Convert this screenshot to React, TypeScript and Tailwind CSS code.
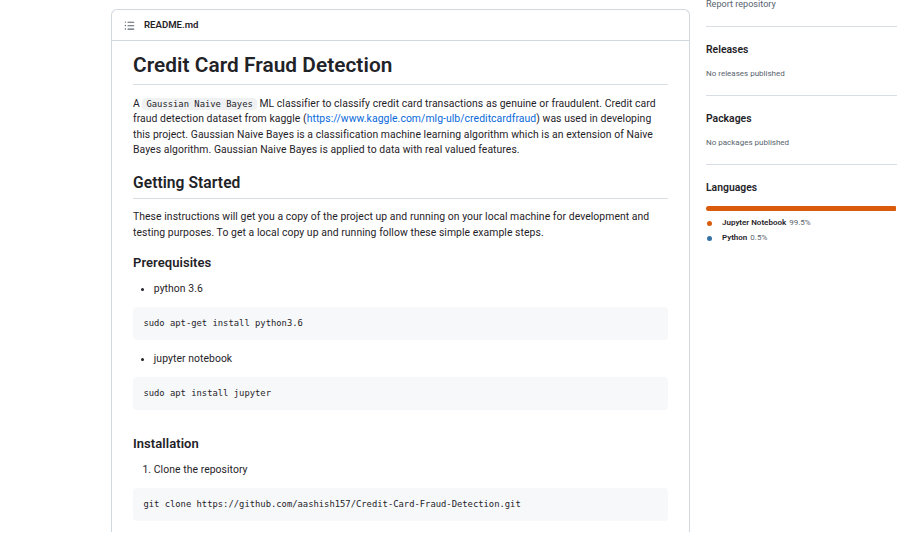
import React from 'react';

const sans = 'font-["Roboto","Noto_Sans",sans-serif]';

const ListIcon = () => (
  <svg viewBox="0 0 16 16" width="11" height="11" fill="#59636e">
    <path d="M5.75 2.5h8.5a.75.75 0 0 1 0 1.5h-8.5a.75.75 0 0 1 0-1.5Zm0 5h8.5a.75.75 0 0 1 0 1.5h-8.5a.75.75 0 0 1 0-1.5Zm0 5h8.5a.75.75 0 0 1 0 1.5h-8.5a.75.75 0 0 1 0-1.5ZM2 14a1 1 0 1 1 0-2 1 1 0 0 1 0 2Zm1-6a1 1 0 1 1-2 0 1 1 0 0 1 2 0ZM2 4a1 1 0 1 1 0-2 1 1 0 0 1 0 2Z" />
  </svg>
);

const Code = ({ children }: { children: React.ReactNode }) => (
  <pre className='mb-[10.4px] rounded-[4px] bg-[#f6f8fa] px-[10.4px] py-[10.4px] font-["DejaVu_Sans_Mono",monospace] text-[8.84px] leading-[12.8px] tracking-normal text-[#1f2328]'>
    {children}
  </pre>
);

const SideSection = ({ title, children }: { title: string; children: React.ReactNode }) => (
  <div className="border-t border-[#d8dee4] pt-[16px]">
    <h2 className="text-[10.4px] font-semibold leading-[14px] text-[#1f2328]">{title}</h2>
    {children}
  </div>
);

export default function App() {
  return (
    <div className={`h-[536px] w-[911px] overflow-hidden bg-white ${sans} text-[#1f2328]`}>
      <div className="ml-[111px] flex gap-[16px]">
        {/* README card */}
        <div className="mt-[9px] w-[579px] shrink-0 rounded-t-[6px] border border-b-0 border-[#d1d9e0]">
          <div className="flex h-[31px] items-center gap-[9px] border-b border-[#d1d9e0] pl-[12px]">
            <ListIcon />
            <span className="text-[9.6px] font-semibold">README.md</span>
          </div>
          <article className="px-[21px] pt-[11px] text-[10.4px] leading-[15.6px] tracking-[0.06px]">
            <h1 className="mb-[10.4px] border-b border-[#d8dee4] pb-[6.24px] text-[20.8px] font-semibold leading-[26px]">
              Credit Card Fraud Detection
            </h1>
            <p className="mb-[10.4px]">
              A{' '}
              <code className='rounded-[4px] bg-[#eff1f3] px-[4px] py-[1px] font-["DejaVu_Sans_Mono",monospace] text-[8.84px] leading-none tracking-normal'>
                Gaussian Naive Bayes
              </code>{' '}
              ML classifier to classify credit card transactions as genuine or fraudulent. Credit card fraud detection
              dataset from kaggle (
              <a className="text-[#0969da]">https://www.kaggle.com/mlg-ulb/creditcardfraud</a>) was used in developing
              this project. Gaussian Naive Bayes is a classification machine learning algorithm which is an extension of
              Naive Bayes algorithm. Gaussian Naive Bayes is applied to data with real valued features.
            </p>
            <h2 className="mb-[10.4px] mt-[15.6px] border-b border-[#d8dee4] pb-[4.68px] text-[15.6px] font-semibold leading-[19.5px]">
              Getting Started
            </h2>
            <p className="mb-[10.4px]">
              These instructions will get you a copy of the project up and running on your local machine for
              development and testing purposes. To get a local copy up and running follow these simple example steps.
            </p>
            <h3 className="mb-[9.4px] mt-[14.6px] text-[13px] font-semibold leading-[16.25px]">Prerequisites</h3>
            <ul className="mb-[10.4px] list-disc pl-[20.8px]">
              <li>python 3.6</li>
            </ul>
            <Code>sudo apt-get install python3.6</Code>
            <ul className="mb-[10.4px] list-disc pl-[20.8px]">
              <li>jupyter notebook</li>
            </ul>
            <Code>sudo apt install jupyter</Code>
            <h3 className="mb-[9.4px] mt-[26px] text-[13px] font-semibold leading-[16.25px]">Installation</h3>
            <ol className="mb-[10.4px] list-decimal pl-[20.8px]">
              <li>Clone the repository</li>
            </ol>
            <Code>git clone https://github.com/aashish157/Credit-Card-Fraud-Detection.git</Code>
          </article>
        </div>

        {/* Sidebar */}
        <aside className="mt-[-2px] w-[191px] shrink-0">
          <div className="pb-[16px] text-[9.1px] leading-[12px] text-[#59636e]">Report repository</div>
          <SideSection title="Releases">
            <p className="mb-[16px] mt-[12px] text-[8px] leading-[10px] text-[#59636e]">No releases published</p>
          </SideSection>
          <SideSection title="Packages">
            <p className="mb-[16px] mt-[12px] text-[8px] leading-[10px] text-[#59636e]">No packages published</p>
          </SideSection>
          <SideSection title="Languages">
            <div className="mt-[11px] flex h-[5px] gap-[1px] overflow-hidden rounded-[3px]">
              <div className="h-full bg-[#da5b0b]" style={{ width: '99.5%' }} />
              <div className="h-full flex-1 bg-[#3572a5]" />
            </div>
            <ul className="mt-[7px] flex flex-col gap-[5px] text-[8px] leading-[10px]">
              <li className="flex items-center">
                <span className="ml-[1px] mr-[10px] h-[5px] w-[5px] rounded-full bg-[#da5b0b]" />
                <span className="font-semibold text-[#1f2328]">Jupyter Notebook</span>
                <span className="ml-[3px] text-[#59636e]">99.5%</span>
              </li>
              <li className="flex items-center">
                <span className="ml-[1px] mr-[10px] h-[5px] w-[5px] rounded-full bg-[#3572a5]" />
                <span className="font-semibold text-[#1f2328]">Python</span>
                <span className="ml-[3px] text-[#59636e]">0.5%</span>
              </li>
            </ul>
          </SideSection>
        </aside>
      </div>
    </div>
  );
}
